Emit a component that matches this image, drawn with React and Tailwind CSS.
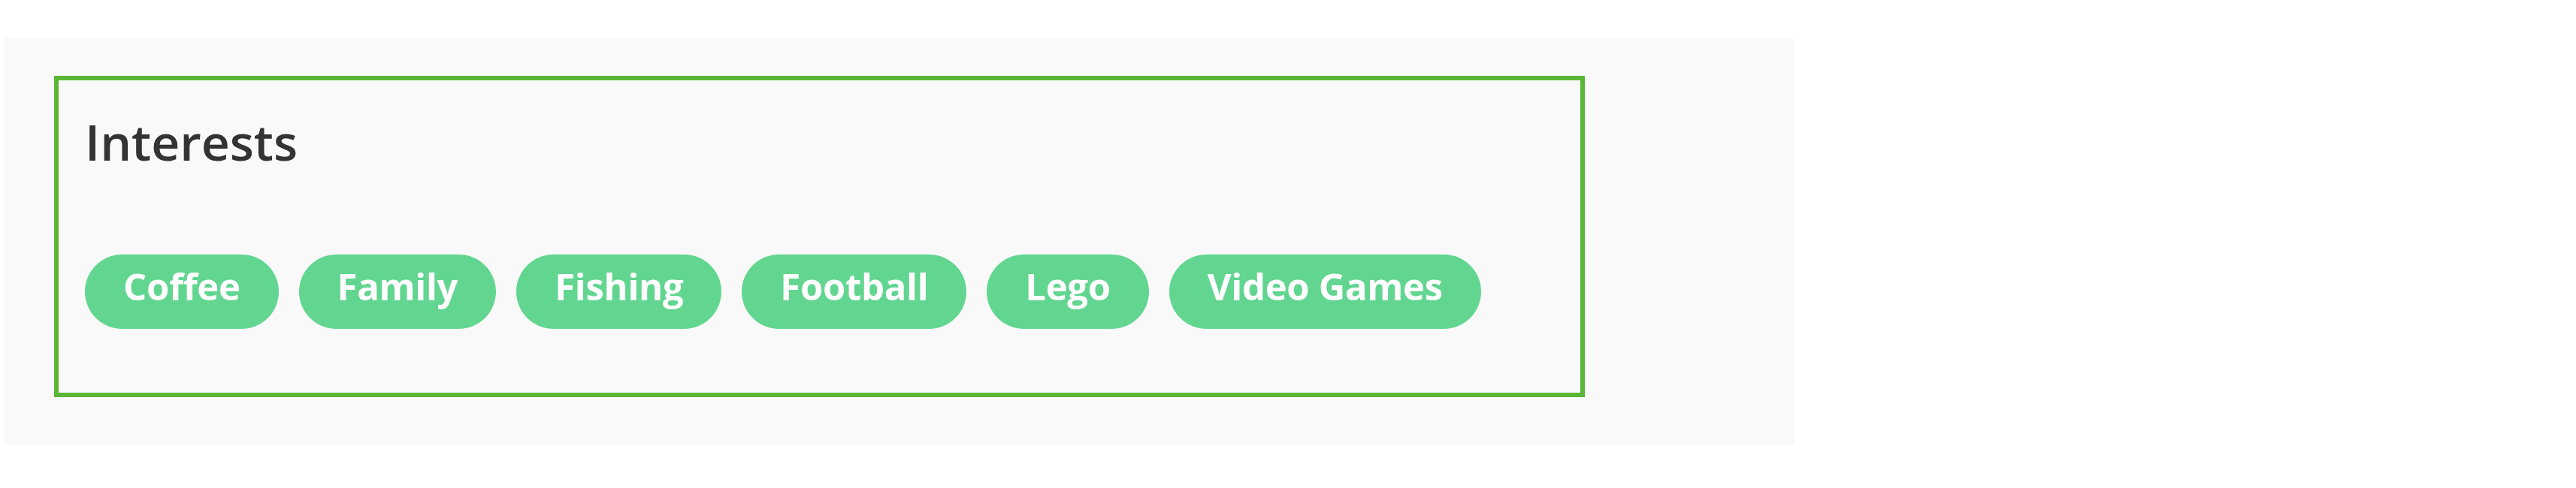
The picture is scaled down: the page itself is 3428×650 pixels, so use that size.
const interests = ['Coffee', 'Family', 'Fishing', 'Football', 'Lego', 'Video Games'];

export default function App() {
  return (
    <div className="min-h-[650px] bg-white pt-[51px] pl-[6px]" style={{ fontFamily: '"Open Sans", "Noto Sans", sans-serif' }}>
      <div className="w-[2382px] h-[542px] bg-[#f9f9f9] pl-[66px] pt-[50px]">
        <div className="w-[2037px] h-[428px] border-[6px] border-[#5ab735] px-[35px] pt-[42px]">
          <h2 className="text-[66px] leading-[1.2] font-semibold text-[#333333]">Interests</h2>
          <div className="mt-[111px] flex gap-[27px]">
            {interests.map((item) => (
              <span
                key={item}
                className="h-[99px] px-[51px] pt-[17px] rounded-full bg-[#62d690] text-white text-[49px] leading-[50px] font-bold tracking-[-0.3px] whitespace-nowrap"
              >
                {item}
              </span>
            ))}
          </div>
        </div>
      </div>
    </div>
  );
}
